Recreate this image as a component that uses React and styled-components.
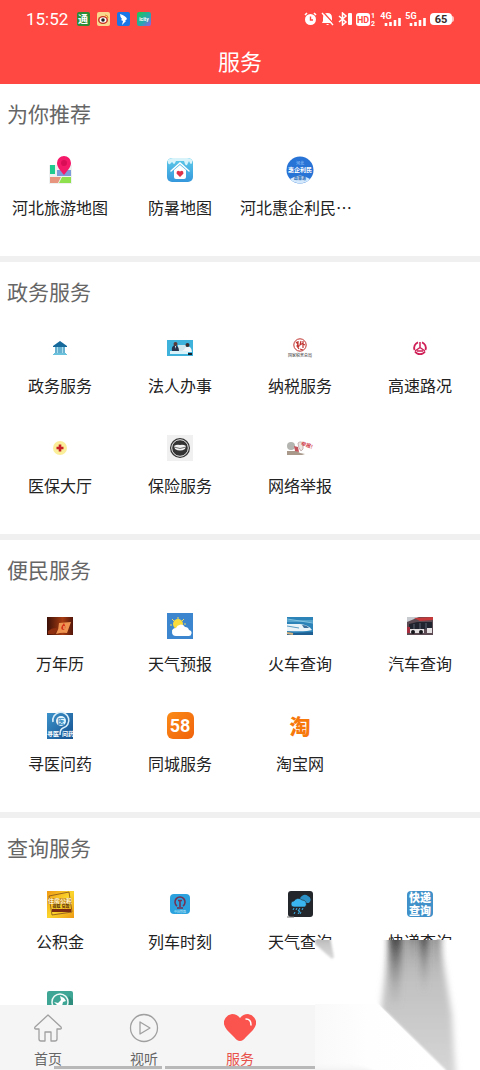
import React, { useState } from 'react';
import styled, { createGlobalStyle } from 'styled-components';

const cjk = '"Noto Sans CJK SC", sans-serif';

/* ---------- service icons, all drawn in a 40x40 box ---------- */

const TravelMap = () => (
  <Icon viewBox="0 0 40 40">
    <rect x="9" y="15" width="23" height="19" fill="#eef1f0" />
    <rect x="10" y="15" width="5" height="9" fill="#1fcb8e" />
    <path d="M17 20h14v6H17z" fill="#7d9bd8" />
    <path d="M10 27h11l-3 6h-8z" fill="#e89580" />
    <path d="M22 27h9v6H19z" fill="#8ee04c" />
    <path d="M24 25c-4-5-7-8-7-12a7 7 0 0 1 14 0c0 4-3 7-7 12z" fill="#f5196a" />
    <circle cx="24" cy="13" r="3" fill="#d90d55" />
  </Icon>
);

const CoolMap = () => (
  <Icon viewBox="0 0 40 40">
    <defs>
      <linearGradient id="cool" x1="0" y1="0" x2="0" y2="1">
        <stop offset="0" stopColor="#5fcbe9" />
        <stop offset="1" stopColor="#3497dc" />
      </linearGradient>
    </defs>
    <rect x="7" y="8" width="26" height="24" rx="5" fill="url(#cool)" />
    <path d="M8 10q2-2 5-2h14q3 0 5 2v3q-1 2-2 0l-1-2-2 4q-1 1-2-1l-1-3h-8l-1 2q-1 2-2 0l-1-1-2 2q-1 1-2-1z" fill="#d9f3fb" />
    <path d="M14 20l6-5 6 5v7q0 2-2 2h-8q-2 0-2-2z" fill="#fff" />
    <path d="M11 21l9-8 9 8" fill="none" stroke="#fff" strokeWidth="1.500" strokeLinecap="round" />
    <path d="M20 27l-3.500-3.500q0-4 3.500-2 3.500-2 3.500 2z" fill="#dc3148" />
  </Icon>
);

const HuiQi = () => (
  <Icon viewBox="0 0 40 40">
    <circle cx="20" cy="20" r="13.500" fill="#2873d6" />
    <path d="M10 29q10-7 20 0a13.500 13.500 0 0 1-20 0z" fill="#d4e9fc" />
    <IconText x="20" y="15" fontSize="4" fill="#a9d0ff">河北</IconText>
    <IconText x="20" y="22" fontSize="6" fontWeight="700" fill="#fff">惠企利民</IconText>
    <IconText x="20" y="30" fontSize="4" fontWeight="700" fill="#2668b4">政策通</IconText>
  </Icon>
);

const Government = () => (
  <Icon viewBox="0 0 40 40">
    <path d="M13 18l7-5 7 5v1H13z" fill="#15699b" />
    <path d="M15 19h10v7H15z" fill="#a9dcec" />
    <path d="M16 19v7M19 19v7M21 19v7M24 19v7" stroke="#2584b3" />
    <path d="M14 25h12v1h1v1H13v-1h1z" fill="#69c1db" />
  </Icon>
);

const Legal = () => (
  <Icon viewBox="0 0 40 40">
    <rect x="7" y="12" width="26" height="16" fill="#3fb2dc" />
    <path d="M18 17h8v6h-8z" fill="#cfe6ec" />
    <path d="M12 23q-1-5 3-6 4 1 4 6z" fill="#26344d" />
    <circle cx="15.500" cy="16" r="2" fill="#5b3a38" />
    <path d="M15 18h1l0 3z" fill="#fff" />
    <path d="M22 23q3-1 3-3 2-2 5-1 2 2 2 5H22z" fill="#f3f6f8" />
    <circle cx="27.500" cy="17" r="2" fill="#3d3031" />
    <path d="M10 23h18v3H10z" fill="#d9f1f8" />
    <path d="M28 25h4v2h-4z" fill="#17212b" />
  </Icon>
);

const Tax = () => (
  <Icon viewBox="0 0 40 40">
    <circle cx="20" cy="17" r="6.200" fill="#fff" stroke="#c0322e" />
    <path d="M16 14l2 2-1 2 2 3M18 13v4l1 2M21 13l-1 4 3-2v5M23 13v3l2 1M20 21l3 1" fill="none" stroke="#c0322e" strokeWidth="1.200" />
    <IconText x="20" y="29" fontSize="4" fontWeight="500" fill="#555">国家税务总局</IconText>
  </Icon>
);

const Highway = () => (
  <Icon viewBox="0 0 40 40" fill="none" stroke="#cf2158">
    <path d="M18 14.400a6 6 0 0 0-3.500 7.600M22 14.400a6 6 0 0 1 3.500 7.600M15 23.500a6 6 0 0 0 10 0" strokeWidth="1.800" />
    <path d="M20 14v6M20 19.500l-5 3.500M20 19.500l5 3.500M17 23h6" strokeWidth="1.500" />
  </Icon>
);

const Medical = () => (
  <Icon viewBox="0 0 40 40">
    <circle cx="20" cy="20" r="7" fill="#fbee9b" />
    <path d="M20 16.500v7M16.500 20h7" stroke="#c71f25" strokeWidth="2.600" />
  </Icon>
);

const Insurance = () => (
  <Icon viewBox="0 0 40 40">
    <rect x="7" y="7" width="26" height="26" fill="#f0f0f0" />
    <circle cx="20" cy="20" r="10" fill="#333" />
    <circle cx="20" cy="20" r="8.300" fill="none" stroke="#e8e8e8" />
    <path d="M14 18q3-2 6-1 3-1 6 1l-1 3q-5 3-10 0z" fill="#f2f2f2" />
    <path d="M14 19q6 3 12 0" fill="none" stroke="#555" strokeWidth=".8" />
  </Icon>
);

const Report = () => (
  <Icon viewBox="0 0 40 40">
    <circle cx="11" cy="18" r="4" fill="#b4b4b0" />
    <path d="M7 23h10l3 2 5 1-3 1H7z" fill="#a9998a" />
    <path d="M14 18l4 1 1 5-4-1z" fill="#c4545c" />
    <path d="M18 15q4-3 5 2t-2 6q-3-3-3-8z" fill="#ede4e4" stroke="#c8b3b3" />
    <g transform="rotate(18 27 17)">
      <IconText x="27" y="19" fontSize="5" fontWeight="700" fill="#d13b4b">举报!</IconText>
    </g>
  </Icon>
);

const Calendar = () => (
  <Icon viewBox="0 0 40 40">
    <defs>
      <linearGradient id="cal">
        <stop offset="0" stopColor="#3b1008" />
        <stop offset=".6" stopColor="#a63c12" />
        <stop offset="1" stopColor="#53150a" />
      </linearGradient>
    </defs>
    <rect x="7" y="11" width="26" height="18" fill="url(#cal)" />
    <path d="M8 25q6-5 11-2l-5 5H8z" fill="#8e2f10" />
    <path d="M19 17l12-1-4 11q-5-1-11 1 3-5 3-11z" fill="#ee9450" />
    <path d="M24 17q-5 6-1 7 4-1 1-7z" fill="#d5321a" />
    <path d="M24 20v3" stroke="#ffd28a" />
  </Icon>
);

const Weather = () => (
  <Icon viewBox="0 0 40 40">
    <rect x="7" y="7" width="26" height="26" fill="#3b86ce" />
    <path d="M18 11v2M12 13l2 2M10 19h2M24 13l-2 2M26 18h-2M12 25l2-2" stroke="#f6dd58" />
    <circle cx="18" cy="18" r="5" fill="#fbdc3d" />
    <path d="M16 30a4 4 0 0 1 0-8 5 5 0 0 1 9-1 4 4 0 0 1 4 3 3 3 0 0 1-1 6z" fill="#fff" />
  </Icon>
);

const Train = () => (
  <Icon viewBox="0 0 40 40">
    <rect x="7" y="11" width="26" height="18" fill="#2c83b8" />
    <path d="M7 15h26M7 13l26 4" stroke="#7fc1df" />
    <path d="M7 18h13q9 1 12 6-5 2-25 1z" fill="#eaf3f8" />
    <path d="M22 19q5 0 7 3h-5z" fill="#3a6f9b" />
    <path d="M7 20l12 2" stroke="#5a9cc4" />
    <path d="M7 26l8 1 18-1v3H7z" fill="#1f5f92" />
    <path d="M7 27l6 1" stroke="#d7b47f" strokeWidth="2" />
  </Icon>
);

const Bus = () => (
  <Icon viewBox="0 0 40 40">
    <rect x="7" y="11" width="26" height="18" fill="#5c4b52" />
    <path d="M7 11h12l-12 5z" fill="#c7cbd0" />
    <path d="M14 12l19-1v3l-13 1z" fill="#c6393a" />
    <path d="M9 18l8-2h15v7H9z" fill="#20242e" />
    <path d="M14 18v5M20 17v6M26 17v6" stroke="#5f6773" />
    <path d="M10 23h14v4H10zM27 22h5v5h-5z" fill="#e4dfe1" />
    <path d="M7 21h3v6H7z" fill="#a52d3d" />
    <circle cx="21" cy="26" r="2" fill="#16171b" />
    <circle cx="13" cy="26" r="2" fill="#16171b" />
  </Icon>
);

const Doctor = () => (
  <Icon viewBox="0 0 40 40">
    <defs>
      <linearGradient id="doc" x1="0" y1="0" x2="1" y2="1">
        <stop offset="0" stopColor="#3c93cb" />
        <stop offset="1" stopColor="#15508f" />
      </linearGradient>
    </defs>
    <rect x="7" y="7" width="26" height="26" fill="url(#doc)" />
    <path d="M13 16a8 8 0 1 1 10 6q-3 1-3 7" fill="none" stroke="#d9edf8" strokeWidth="1.600" />
    <circle cx="21" cy="15" r="5" fill="#e6f4fb" />
    <IconText x="21" y="18" fontSize="7" fontWeight="700" fill="#3b8fc2">医</IconText>
    <IconText x="13" y="30" fontSize="6" fontWeight="700" fill="#fff">寻医</IconText>
    <IconText x="28" y="30" fontSize="6" fontWeight="700" fill="#fff">问药</IconText>
  </Icon>
);

const City = () => (
  <Icon viewBox="0 0 40 40">
    <defs>
      <linearGradient id="city" x1="0" y1="0" x2="1" y2="1">
        <stop offset="0" stopColor="#fb8b16" />
        <stop offset="1" stopColor="#f0620c" />
      </linearGradient>
    </defs>
    <rect x="7" y="6" width="27" height="27" rx="6" fill="url(#city)" />
    <NumText x="20" y="26" fontSize="18" fill="#fff">58</NumText>
  </Icon>
);

const Taobao = () => (
  <Icon viewBox="0 0 40 40">
    <IconText x="20" y="28" fontSize="21" fontWeight="900" fill="#f7790c">淘</IconText>
  </Icon>
);

const Fund = () => (
  <Icon viewBox="0 0 40 40">
    <defs>
      <linearGradient id="fund" x1="0" y1="0" x2="1" y2="1">
        <stop offset="0" stopColor="#f09a13" />
        <stop offset=".5" stopColor="#fbd52b" />
        <stop offset="1" stopColor="#ee9a14" />
      </linearGradient>
    </defs>
    <rect x="7" y="7" width="27" height="27" fill="url(#fund)" />
    <path d="M9 12l20-4 3 20-20 3z" fill="none" stroke="#81501a" strokeWidth=".8" />
    <path d="M12 25h19v3H12z" fill="#7b2b12" />
    <path d="M8 14h24v6H8z" fill="#b06a18" opacity=".6" />
    <IconText x="20" y="19" fontSize="6" fontWeight="700" fill="#fff6d5">住房公积</IconText>
    <IconText x="21" y="24" fontSize="4" fontWeight="700" fill="#4f260c">提取 贷款</IconText>
  </Icon>
);

const Railway = () => (
  <Icon viewBox="0 0 40 40">
    <rect x="10" y="10" width="20" height="20" rx="4" fill="#2ba2dd" />
    <path d="M17 22a5 5 0 1 1 6 0" fill="none" stroke="#753252" strokeWidth="1.600" />
    <path d="M18 16.500h4M20 16v7M17 24h6" stroke="#753252" strokeWidth="1.600" />
    <IconText x="20" y="29" fontSize="3" fill="#c3e8f8">中国铁路</IconText>
  </Icon>
);

const Rain = () => (
  <Icon viewBox="0 0 40 40">
    <rect x="8" y="7" width="25" height="26" rx="3" fill="#23262a" />
    <path d="M20 17a5 5 0 0 1 8-5 4 4 0 0 1 1 7h-7z" fill="#2b91c7" />
    <path d="M14 23a3 3 0 0 1 0-6 5 5 0 0 1 8-1 4 4 0 0 1 3 7z" fill="#3bb5ef" stroke="#23262a" strokeWidth=".6" />
    <path d="M14 24l-1 2M17 24l-1 2M23 24l-1 2M15 28l-1 2M21 28l-1 2M20 24l-2 3h2l-2 3" fill="none" stroke="#3bb5ef" />
    <path d="M7 33h7" stroke="#777" />
  </Icon>
);

const Express = () => (
  <Icon viewBox="0 0 40 40">
    <rect x="7" y="7" width="26" height="26" rx="4" fill="#4091c9" />
    <IconText x="20" y="18" fontSize="11" fontWeight="900" fill="#fff">快递</IconText>
    <IconText x="20" y="31" fontSize="11" fontWeight="900" fill="#fff">查询</IconText>
  </Icon>
);

const Globe = () => (
  <Icon viewBox="0 0 40 40">
    <rect x="7" y="7" width="26" height="26" rx="2" fill="#3fa595" />
    <path d="M29 12l4 4v16H20z" fill="#2f8d7e" />
    <circle cx="20" cy="18" r="8" fill="#3fa595" stroke="#f3fbf9" strokeWidth="1.500" />
    <path d="M20 12l4 2 2 3-3 1-1 4-4 3-4-1 3-3-3-3 4 1 3-3z" fill="#fff" />
  </Icon>
);

/* ---------- data ---------- */

const sections = [
  {
    title: '为你推荐',
    items: [
      { name: '河北旅游地图', icon: TravelMap },
      { name: '防暑地图', icon: CoolMap },
      { name: '河北惠企利民…', icon: HuiQi, clipped: true },
    ],
  },
  {
    title: '政务服务',
    items: [
      { name: '政务服务', icon: Government },
      { name: '法人办事', icon: Legal },
      { name: '纳税服务', icon: Tax },
      { name: '高速路况', icon: Highway },
      { name: '医保大厅', icon: Medical },
      { name: '保险服务', icon: Insurance },
      { name: '网络举报', icon: Report },
    ],
  },
  {
    title: '便民服务',
    items: [
      { name: '万年历', icon: Calendar },
      { name: '天气预报', icon: Weather },
      { name: '火车查询', icon: Train },
      { name: '汽车查询', icon: Bus },
      { name: '寻医问药', icon: Doctor },
      { name: '同城服务', icon: City },
      { name: '淘宝网', icon: Taobao },
    ],
  },
  {
    title: '查询服务',
    items: [
      { name: '公积金', icon: Fund },
      { name: '列车时刻', icon: Railway },
      { name: '天气查询', icon: Rain },
      { name: '快递查询', icon: Express },
      { name: '', icon: Globe },
    ],
  },
];

const HomeIcon = () => (
  <TabIcon viewBox="0 0 32 32" fill="none" stroke="#a0a0a0" strokeLinejoin="round">
    <path d="M16 3L3 15q-1 2 1 2h3v10q0 2 2 2h4v-9h6v9h4q2 0 2-2V17h3q2 0 1-2z" strokeWidth="1.300" />
  </TabIcon>
);

const PlayIcon = () => (
  <TabIcon viewBox="0 0 32 32" fill="none" stroke="#a0a0a0" strokeLinejoin="round">
    <circle cx="16" cy="16" r="13.500" strokeWidth="1.300" />
    <path d="M12 10l10 6-10 6z" strokeWidth="1.300" />
  </TabIcon>
);

const HeartIcon = () => (
  <TabIcon viewBox="0 0 32 32">
    <path d="M16 29q-3 0-6-4l-7-7Q-1 13 0 9q2-6 8-7 5 0 8 4 3-4 8-4 6 1 8 7 1 4-3 9l-7 7q-3 4-6 4z" fill="#fb544e" />
    <path d="M22 7q5 0 5 6" fill="none" stroke="#fff" strokeWidth="1.500" strokeLinecap="round" />
  </TabIcon>
);

const tabs = [
  { name: '首页', icon: HomeIcon },
  { name: '视听', icon: PlayIcon },
  { name: '服务', icon: HeartIcon },
];

/* ---------- page ---------- */

function StatusBar() {
  return (
    <Status>
      <Time>15:52</Time>
      <Apps>
        <svg width="13" height="14" viewBox="0 0 13 14">
          <rect width="13" height="14" rx="2" fill="#2d8a35" />
          <IconText x="6" y="11" fontSize="10" fontWeight="700" fill="#fff">通</IconText>
        </svg>
        <svg width="13" height="14" viewBox="0 0 13 14">
          <rect width="13" height="14" rx="2" fill="#f9d88d" />
          <ellipse cx="6" cy="8" rx="5" ry="4" fill="#c92f20" />
          <ellipse cx="6" cy="8" rx="3.500" ry="2.700" fill="#fff" />
          <circle cx="6" cy="8" r="1.800" fill="#222" />
          <path d="M8 3q3 0 3 3" fill="none" stroke="#e88826" />
        </svg>
        <svg width="13" height="14" viewBox="0 0 13 14">
          <rect width="13" height="14" rx="2" fill="#1976e4" />
          <path d="M3 2q6 2 7 5L8 9l1 0-4 4 1-4-2-1 1-1q-2-2-2-5z" fill="#fff" />
        </svg>
        <svg width="14" height="14" viewBox="0 0 14 14">
          <defs>
            <linearGradient id="app" x1="0" y1="0" x2="1" y2="1">
              <stop offset="0" stopColor="#1fc94f" />
              <stop offset=".6" stopColor="#29a5b5" />
              <stop offset="1" stopColor="#a94fe5" />
            </linearGradient>
          </defs>
          <rect width="14" height="14" rx="2" fill="url(#app)" />
          <NumText x="7" y="9" fontSize="5" fill="#fff">icity</NumText>
        </svg>
      </Apps>
      <Signals>
        <svg width="13" height="14" viewBox="0 0 13 14">
          <circle cx="6.500" cy="7.500" r="5.500" fill="#fff" />
          <path d="M1 3l2-2M12 3l-2-2" stroke="#fff" strokeWidth="1.600" />
          <path d="M6.500 4.500v3.500h2.500" fill="none" stroke="#ff4841" strokeWidth="1.400" />
        </svg>
        <svg width="13" height="14" viewBox="0 0 13 14">
          <path d="M1 11l1-2V6q0-5 4.500-5T11 6v3l1 2zM5 12h3q-1 2-3 0z" fill="#fff" />
          <path d="M2 0l11 12" stroke="#ff4841" strokeWidth="1.500" />
          <path d="M1 1l11 12" stroke="#fff" strokeWidth="1.400" />
        </svg>
        <svg width="14" height="14" viewBox="0 0 14 14">
          <path d="M1 4l7 6-3.500 3V1L8 4l-7 6" fill="none" stroke="#fff" strokeWidth="1.500" />
          <rect x="10" y="1" width="4" height="12" rx="1" fill="#fff" />
        </svg>
        <svg width="20" height="14" viewBox="0 0 20 14">
          <rect width="14" height="13" y="1" rx="3" fill="#fff" />
          <NumText x="7" y="11" fontSize="9" fill="#ff4841">HD</NumText>
          <NumText x="17" y="6" fontSize="7" fill="#fff">1</NumText>
          <NumText x="17" y="14" fontSize="7" fill="#fff">2</NumText>
        </svg>
        {['4G', '5G'].map((net) => (
          <svg key={net} width="21" height="14" viewBox="0 0 21 14">
            <NumText x="6" y="7" fontSize="9" fill="#fff">{net}</NumText>
            <path d="M6 14v-3M10.500 14v-4M15 14V8M19.500 14V6" stroke="#fff" strokeWidth="2.600" />
          </svg>
        ))}
        <svg width="24" height="14" viewBox="0 0 24 14">
          <rect y="1" width="22" height="12" rx="4" fill="#fff" />
          <path d="M22 4q2 0 2 3t-2 3z" fill="#ffc4bf" />
          <NumText x="11" y="11" fontSize="11" fill="#3a2b2b">65</NumText>
        </svg>
      </Signals>
    </Status>
  );
}

function Smear() {
  return (
    <SmearSvg viewBox="0 0 165 131" width="165" height="131" aria-hidden="true">
      <defs>
        <linearGradient id="fall" x1="0" y1="0" x2="0" y2="1">
          <stop offset="0" stopColor="#aaa" />
          <stop offset=".35" stopColor="#c2c2c2" />
          <stop offset="1" stopColor="#d6d6d6" />
        </linearGradient>
        <linearGradient id="streak" x1="0" y1="0" x2="0" y2="1">
          <stop offset="0" stopColor="#222" stopOpacity=".8" />
          <stop offset=".4" stopColor="#555" stopOpacity=".45" />
          <stop offset="1" stopColor="#999" stopOpacity="0" />
        </linearGradient>
        <linearGradient id="bar">
          <stop offset="0" stopColor="#f9f9f9" />
          <stop offset=".4" stopColor="#fefefe" />
          <stop offset="1" stopColor="#fff" />
        </linearGradient>
        <linearGradient id="foot" x1="0" y1="1" x2="0" y2="0">
          <stop offset="0" stopColor="#ddd" />
          <stop offset="1" stopColor="#fff" stopOpacity="0" />
        </linearGradient>
        <filter id="soft" x="-60%" y="-20%" width="220%" height="140%">
          <feGaussianBlur stdDeviation="3 1" />
        </filter>
        <filter id="edge" x="-20%" y="-20%" width="140%" height="140%">
          <feGaussianBlur stdDeviation="1" />
        </filter>
        <clipPath id="below">
          <rect y="1" width="165" height="130" />
        </clipPath>
      </defs>
      <rect y="1" width="165" height="130" fill="#fff" />
      <g clipPath="url(#below)">
        <path d="M0 -2h15l4 20-2 2L0 5z" fill="url(#fall)" opacity=".9" filter="url(#edge)" />
        <path d="M75 -4h48q6 30 14 80 2 40 4 60h-12L66 70z" fill="url(#fall)" filter="url(#soft)" />
        <path d="M74 -3h13l-3 75-8-4z" fill="url(#streak)" filter="url(#soft)" />
        <path d="M94 -3h8l-2 35h-4z" fill="url(#streak)" opacity=".4" filter="url(#soft)" />
        <path d="M105 -3h8l-2 60h-4z" fill="url(#streak)" filter="url(#soft)" />
        <path d="M119 -3h8v35h-5z" fill="url(#streak)" opacity=".5" filter="url(#soft)" />
        <path d="M55 56L64 66 131 131v8H50z" fill="#fff" filter="url(#edge)" />
        <path d="M0 65h63l66 66H0z" fill="url(#bar)" />
        <path d="M-10 123q40-6 70 10v6h-70z" fill="url(#foot)" filter="url(#soft)" />
      </g>
    </SmearSvg>
  );
}

export default function App() {
  const [active, setActive] = useState('服务');
  return (
    <Page>
      <GlobalStyle />
      <Header>
        <StatusBar />
        <Title>服务</Title>
      </Header>
      <Content>
        {sections.map((section) => (
          <Section key={section.title}>
            <SectionTitle>{section.title}</SectionTitle>
            <Grid>
              {section.items.map((item, index) => (
                <Service key={index} href="#">
                  <item.icon />
                  <Label $clipped={item.clipped}>{item.name}</Label>
                </Service>
              ))}
            </Grid>
          </Section>
        ))}
      </Content>
      <TabBar>
        {tabs.map((tab) => (
          <Tab key={tab.name} $active={tab.name === active} onClick={() => setActive(tab.name)}>
            <tab.icon />
            {tab.name}
          </Tab>
        ))}
      </TabBar>
      <ScrollHint><i /><i /></ScrollHint>
      <Smear />
    </Page>
  );
}

const GlobalStyle = createGlobalStyle`
  *{
    box-sizing:border-box;
  }
  body{
    margin:0;
    background:#fff;
    font-family:${cjk};
  }
`
const Page = styled.div`
  position:relative;
  display:flex;
  flex-direction:column;
  height:100vh;
  overflow:hidden;
`
const Header = styled.header`
  flex:none;
  height:84px;
  background:#ff4841;
  color:#fff;
`
const Status = styled.div`
  display:flex;
  align-items:center;
  height:38px;
  padding:0 26px;
`
const Time = styled.span`
  font-family:Roboto, sans-serif;
  font-size:17px;
  font-weight:400;
`
const Apps = styled.div`
  display:flex;
  gap:7px;
  margin-left:9px;
`
const Signals = styled.div`
  display:flex;
  gap:4px;
  margin-left:auto;
`
const Title = styled.h1`
  margin:0;
  font-size:22px;
  font-weight:400;
  line-height:44px;
  text-align:center;
`
const Content = styled.main`
  flex:1;
  min-height:0;
  overflow-y:auto;
  scrollbar-width:none;
`
const Section = styled.section`
  padding-bottom:12px;
  border-bottom:6px solid #f0f0f0;
`
const SectionTitle = styled.h2`
  margin:0;
  padding:0 7px 2px;
  color:#666;
  font-size:21px;
  font-weight:400;
  line-height:58px;
`
const Grid = styled.div`
  display:grid;
  grid-template-columns:repeat(4, 1fr);
  grid-auto-rows:100px;
`
const Service = styled.a`
  display:flex;
  flex-direction:column;
  align-items:center;
  gap:5px;
  padding-top:6px;
  color:#222;
  text-decoration:none;
`
const Icon = styled.svg`
  flex:none;
  width:40px;
  height:40px;
`
const IconText = styled.text`
  font-family:${cjk};
  text-anchor:middle;
`
const NumText = styled.text`
  font-family:Roboto, sans-serif;
  font-weight:700;
  text-anchor:middle;
`
const Label = styled.span`
  width:100%;
  font-size:16px;
  line-height:24px;
  white-space:nowrap;
  text-align:${(props) => props.$clipped ? 'left' : 'center'};
`
const TabBar = styled.nav`
  flex:none;
  display:grid;
  grid-template-columns:repeat(5, 1fr);
  height:65px;
  background:#f5f5f5;
`
const Tab = styled.button`
  display:flex;
  flex-direction:column;
  align-items:center;
  gap:4px;
  padding:7px 0 0;
  border:0;
  background:none;
  color:${(props) => props.$active ? '#e8504a' : '#666'};
  font-family:inherit;
  font-size:14px;
  line-height:20px;
  cursor:pointer;
`
const TabIcon = styled.svg`
  width:32px;
  height:32px;
`
const ScrollHint = styled.div`
  position:absolute;
  bottom:1px;
  left:54px;
  right:165px;
  display:grid;
  grid-template-columns:108px 1fr;
  gap:3px;
  height:3px;
  i{
    background:#b8b8b8;
  }
`
const SmearSvg = styled.svg`
  position:absolute;
  right:0;
  bottom:0;
  pointer-events:none;
`
